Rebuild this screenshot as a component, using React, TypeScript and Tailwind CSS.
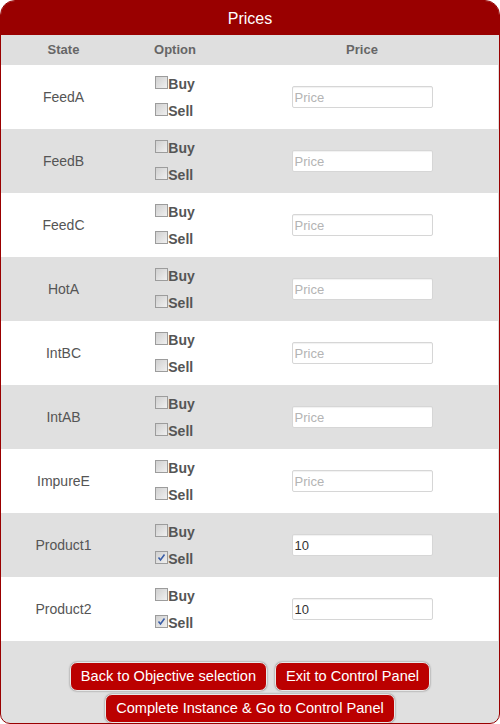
import { useState } from 'react';

interface PriceRow {
    state: string;
    buy: boolean;
    sell: boolean;
    price: string;
}

const initialRows: PriceRow[] = [
    { state: 'FeedA', buy: false, sell: false, price: '' },
    { state: 'FeedB', buy: false, sell: false, price: '' },
    { state: 'FeedC', buy: false, sell: false, price: '' },
    { state: 'HotA', buy: false, sell: false, price: '' },
    { state: 'IntBC', buy: false, sell: false, price: '' },
    { state: 'IntAB', buy: false, sell: false, price: '' },
    { state: 'ImpureE', buy: false, sell: false, price: '' },
    { state: 'Product1', buy: false, sell: true, price: '10' },
    { state: 'Product2', buy: false, sell: true, price: '10' },
];

// Old-style grey checkbox, blue tick when checked
const Check = ({ checked, onClick }: { checked: boolean; onClick: () => void }) => (
    <span
        onClick={onClick}
        className="w-[13px] h-[13px] border border-[#9c9c9c] bg-gradient-to-br from-[#d0d0d0] to-[#f0f0f0] flex items-center justify-center shrink-0 cursor-pointer"
    >
        {checked && (
            <svg width="9" height="9" viewBox="0 0 9 9">
                <path d="M1.5 4.5 L3.5 7 L7.5 1.5" fill="none" stroke="#3a5ea8" strokeWidth="1.6" />
            </svg>
        )}
    </span>
);

const btn = 'h-[29px] px-[10px] bg-[#bb0000] text-white text-[14.6px] border border-[#e8e8e8] rounded-[7px] shadow-[0_0_2px_rgba(0,0,0,0.5)]';

export default function App() {
    const [rows, setRows] = useState<PriceRow[]>(initialRows);

    const update = (i: number, patch: Partial<PriceRow>) => {
        setRows(prev => prev.map((r, idx) => (idx === i ? { ...r, ...patch } : r)));
    };

    return (
        <div className="w-[500px] h-[724px] flex flex-col bg-[#e0e0e0] border border-[#990000] rounded-t-[15px] rounded-b-[10px] overflow-hidden font-['Liberation_Sans',Arial,sans-serif]">
            <div className="h-[34px] bg-[#990000] text-white text-[16px] flex items-center justify-center shrink-0 pt-[1px]">
                Prices
            </div>

            {/* Шапка таблицы */}
            <div className="h-[30px] flex items-center bg-[#dfdfdf] text-[13px] font-bold text-[#666] shrink-0">
                <div className="w-[125px] text-center">State</div>
                <div className="w-[98px] text-center">Option</div>
                <div className="flex-1 text-center pl-[1px]">Price</div>
            </div>

            {rows.map((row, i) => (
                <div
                    key={row.state}
                    className={`h-[64px] w-[497px] flex items-center shrink-0 ${i % 2 === 0 ? 'bg-white' : 'bg-[#e0e0e0]'}`}
                >
                    <div className="w-[125px] text-center text-[14px] text-[#555] pt-[1px]">{row.state}</div>
                    <div className="w-[98px] flex justify-center">
                        <div className="flex flex-col gap-[12px] text-[14px] font-bold text-[#555] leading-[14px] -mt-[1px]">
                            <div className="flex items-start">
                                <Check checked={row.buy} onClick={() => update(i, { buy: !row.buy })} />
                                <span className="mt-[1px]">Buy</span>
                            </div>
                            <div className="flex items-start">
                                <Check checked={row.sell} onClick={() => update(i, { sell: !row.sell })} />
                                <span className="mt-[1px]">Sell</span>
                            </div>
                        </div>
                    </div>
                    <div className="flex-1 flex justify-center pl-[2px]">
                        <input
                            value={row.price}
                            onChange={e => update(i, { price: e.target.value })}
                            placeholder="Price"
                            className="w-[141px] h-[22px] px-[2px] bg-white border border-[#d6d6d6] rounded-[2px] shadow-[inset_0_1px_1px_rgba(0,0,0,0.06)] text-[13px] text-[#333] placeholder:text-[#b4b4b4] outline-none"
                        />
                    </div>
                </div>
            ))}

            <div className="flex-1 flex flex-wrap justify-center content-start gap-x-[8px] gap-y-[3px] pt-[21px] px-[60px]">
                <button className={btn}>Back to Objective selection</button>
                <button className={btn}>Exit to Control Panel</button>
                <button className={btn}>Complete Instance &amp; Go to Control Panel</button>
            </div>
        </div>
    );
}
